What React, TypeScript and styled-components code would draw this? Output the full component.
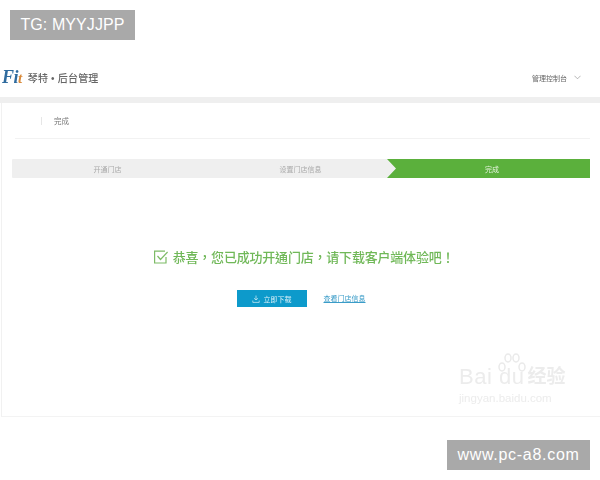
import React from 'react';
import styled, { createGlobalStyle } from 'styled-components';

const GlobalStyle = createGlobalStyle`
  html, body {
    margin: 0;
    padding: 0;
    background: #fff;
  }
  body {
    font-family: "Liberation Sans", "Noto Sans CJK SC", sans-serif;
  }
`;

const Page = styled.div`
  position: relative;
  width: 600px;
  height: 480px;
  overflow: hidden;
  background: #fff;
  padding-top: 64px;
  box-sizing: border-box;
`;

const Stamp = styled.div<{ $corner: 'top' | 'bottom' }>`
  position: absolute;
  height: 30px;
  line-height: 30px;
  background: #a9a9a9;
  color: #fff;
  font-size: 16px;
  text-align: center;
  ${(p) =>
    p.$corner === 'top'
      ? 'top: 10px; left: 10px; width: 125px; letter-spacing: 0.1px;'
      : 'top: 440px; left: 447px; width: 143px; letter-spacing: 0.7px;'}
`;

const Header = styled.header`
  height: 33px;
  display: flex;
  align-items: center;
  justify-content: space-between;
  padding: 0 19px 6px 2px;
  box-sizing: border-box;
`;

const Brand = styled.div`
  display: flex;
  align-items: center;
  gap: 6px;
`;

const Logo = styled.span`
  font-family: "Liberation Serif", serif;
  font-style: italic;
  font-weight: 700;
  font-size: 18px;
  letter-spacing: -0.5px;
  color: #2f6b9e;
  filter: blur(0.3px);
  & > span {
    color: #d98a3a;
    font-size: 15px;
  }
`;

const BrandName = styled.span`
  font-size: 10px;
  font-weight: 500;
  color: #666;
  letter-spacing: 0.2px;
  filter: blur(0.4px);
`;

const Console = styled.div`
  display: flex;
  align-items: center;
  gap: 7px;
  font-size: 7px;
  color: #666;
  filter: blur(0.3px);
`;

const Strip = styled.div`
  height: 6px;
  background: #efefef;
`;

const Panel = styled.main`
  height: 314px;
  margin-left: 1px;
  border-left: 1px solid #f1f1f1;
  border-bottom: 1px solid #f3f3f3;
  box-sizing: border-box;
  padding: 0 10px;
`;

const PanelHead = styled.div`
  height: 36px;
  box-sizing: border-box;
  margin-left: 3px;
  display: flex;
  align-items: center;
  gap: 12px;
  padding-left: 26px;
  border-bottom: 1px solid #f2f2f2;
  font-size: 7.5px;
  color: #777;
  & > i {
    width: 1px;
    height: 8px;
    background: #e6e6e6;
  }
  & > span {
    filter: blur(0.3px);
  }
`;

const Steps = styled.ol`
  list-style: none;
  margin: 20px 0 0;
  padding: 0;
  height: 19px;
  display: grid;
  grid-template-columns: 188px 187px 1fr;
  background: #efefef;
  border-radius: 1px;
`;

const Step = styled.li<{ $active?: boolean; $inset: number }>`
  display: flex;
  align-items: center;
  justify-content: center;
  padding-left: ${(p) => p.$inset}px;
  font-size: 7px;
  color: ${(p) => (p.$active ? '#e4f3dc' : '#aaa')};
  background: ${(p) => (p.$active ? '#5bb03c' : 'transparent')};
  clip-path: ${(p) =>
    p.$active ? 'polygon(0 0, 100% 0, 100% 100%, 0 100%, 9px 50%)' : 'none'};
  & > span {
    filter: blur(0.35px);
  }
`;

const Result = styled.section`
  margin-top: 69px;
  display: flex;
  flex-direction: column;
  align-items: center;
  gap: 24px;
`;

const Message = styled.div`
  display: flex;
  align-items: center;
  gap: 5px;
  height: 19px;
  margin-left: 6px;
  font-family: "Liberation Sans", "Noto Sans CJK TC", sans-serif;
  font-size: 13px;
  font-weight: 500;
  color: #70b858;
  white-space: nowrap;
  letter-spacing: -0.2px;
  & > span {
    filter: blur(0.35px);
  }
`;

const Actions = styled.div`
  display: flex;
  align-items: center;
  gap: 17px;
`;

const Download = styled.button`
  width: 70px;
  height: 17px;
  border: 0;
  padding: 0;
  background: #0d9acb;
  color: #d8f0f8;
  font-family: inherit;
  font-size: 7px;
  display: flex;
  align-items: center;
  justify-content: center;
  gap: 4px;
  & > span {
    filter: blur(0.25px);
  }
`;

const InfoLink = styled.a`
  font-size: 7px;
  margin-bottom: 2px;
  color: #3a9cc8;
  text-decoration: underline;
  filter: blur(0.25px);
`;

const BaiduMark = styled.div`
  position: absolute;
  left: 459px;
  top: 352px;
  width: 110px;
  color: #ececec;
  filter: blur(0.4px);
`;

const MarkRow = styled.div`
  display: flex;
  align-items: center;
  height: 30px;
  font-size: 22px;
  line-height: 30px;
  letter-spacing: 0.5px;
  margin-top: 10px;
  white-space: nowrap;
  & > b {
    font-size: 19px;
    font-weight: 700;
    letter-spacing: 0;
    margin-left: 3px;
  }
`;

const MarkUrl = styled.div`
  font-size: 11.5px;
  line-height: 12px;
  white-space: nowrap;
`;

const Paw = styled.svg`
  position: absolute;
  left: 38px;
  top: 0;
`;

export default function App() {
  return (
    <Page>
      <GlobalStyle />
      <Header>
        <Brand>
          <Logo>
            Fi<span>t</span>
          </Logo>
          <BrandName>琴特 • 后台管理</BrandName>
        </Brand>
        <Console>
          管理控制台
          <svg width="7" height="5" viewBox="0 0 8 5" fill="none" stroke="#888" strokeWidth="0.7">
            <path d="M0.5 0.5 L4 4 L7.5 0.5" />
          </svg>
        </Console>
      </Header>
      <Strip />
      <Panel>
        <PanelHead>
          <i />
          <span>完成</span>
        </PanelHead>
        <Steps>
          <Step $inset={3}>
            <span>开通门店</span>
          </Step>
          <Step $inset={14}>
            <span>设置门店信息</span>
          </Step>
          <Step $active $inset={7}>
            <span>完成</span>
          </Step>
        </Steps>
        <Result>
          <Message>
            <svg width="14" height="14" viewBox="0 0 14 14" fill="none" stroke="#7dbb66" strokeWidth="1.2">
              <path d="M12 7 V13 H0.6 V1.2 H11" />
              <path d="M3.5 6 L6.5 9.5 L13.6 2" />
            </svg>
            <span>恭喜，您已成功开通门店，请下载客户端体验吧！</span>
          </Message>
          <Actions>
            <Download>
              <svg width="8" height="8" viewBox="0 0 8 8" fill="none" stroke="#d8f0f8" strokeWidth="0.7">
                <path d="M4 0.5 V5 M2 3.2 L4 5 L6 3.2 M0.8 5.5 V7.4 H7.2 V5.5" />
              </svg>
              <span>立即下载</span>
            </Download>
            <InfoLink>查看门店信息</InfoLink>
          </Actions>
        </Result>
      </Panel>
      <BaiduMark>
        <Paw width="30" height="32" viewBox="0 0 30 32" fill="none" stroke="#eaeaea" strokeWidth="1.5">
          <ellipse cx="5" cy="15" rx="3" ry="4" />
          <ellipse cx="11" cy="6" rx="3" ry="4" />
          <ellipse cx="19" cy="6" rx="3" ry="4" />
          <ellipse cx="25" cy="15" rx="3" ry="4" />
        </Paw>
        <MarkRow>
          Bai du<b>经验</b>
        </MarkRow>
        <MarkUrl>jingyan.baidu.com</MarkUrl>
      </BaiduMark>
      <Stamp $corner="top">TG: MYYJJPP</Stamp>
      <Stamp $corner="bottom">www.pc-a8.com</Stamp>
    </Page>
  );
}
